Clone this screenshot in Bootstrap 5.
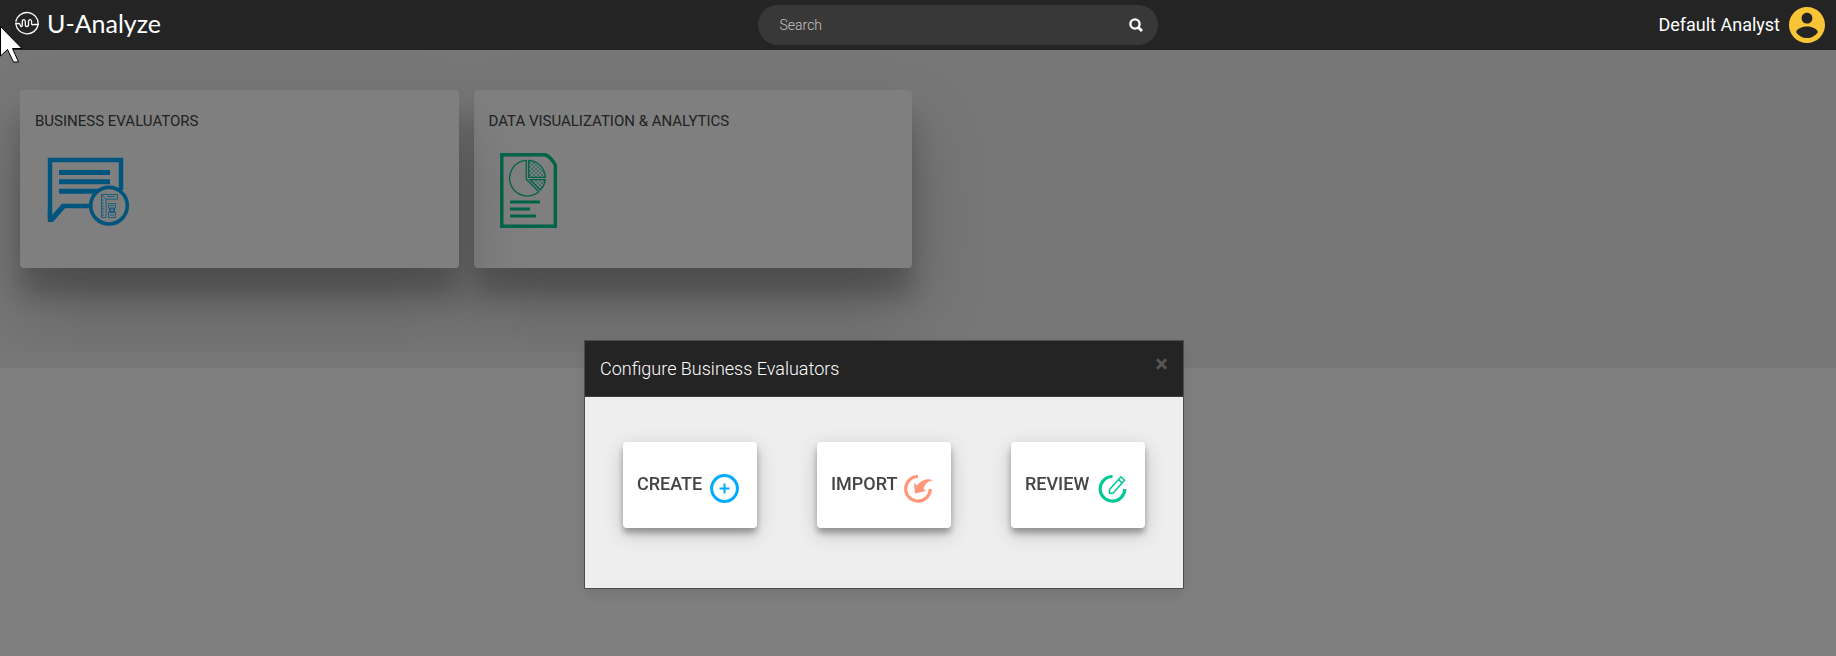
<!DOCTYPE html>
<html lang="en">
<head>
<meta charset="utf-8">
<meta name="viewport" content="width=device-width, initial-scale=1">
<title>U-Analyze</title>
<link href="https://cdn.jsdelivr.net/npm/bootstrap@5.3.0/dist/css/bootstrap.min.css" rel="stylesheet">
<style>
  body { font-family: Roboto, "Liberation Sans", sans-serif; font-size: 14px; background: #fff; color: #444; }

  .topbar { height: 50px; background: #242424; z-index: 1070; }
  .topbar-start { flex: 1 1 90px; padding-left: 15px; }
  .topbar-end { flex: 1 1 0; gap: 9px; padding-right: 11px; }
  .brand-link { gap: 8px; padding-bottom: 4px; }
  .logo { font-family: Lato, "Liberation Sans", sans-serif; font-size: 25px; line-height: 30px; }
  .search { width: 400px; height: 40px; background: #383838; border-radius: 20px; padding: 0 15px 0 22px; }
  .search input { font-size: 14px; font-weight: 300; color: #fff; }
  .search input::placeholder { color: #c4c4c4; opacity: 1; }
  .user { font-size: 18px; line-height: 24px; }

  .workspace { background: #eee; padding-bottom: 15px; }
  .tiles { grid-template-columns: repeat(4, 1fr); gap: 15px; padding: 40px 17px 85px 20px; overflow: hidden; }
  .tile { min-height: 178px; padding: 20px 15px; border-radius: 4px; background: #fff; color: #444;
          box-shadow: 0 27px 24px 0 rgba(0, 0, 0, .2), 0 40px 77px 0 rgba(0, 0, 0, .22); }
  .tile h2 { font-size: 15px; line-height: 22px; font-weight: 400; margin-bottom: 18px; }

  .config { padding: 340px 68px 0 0; }
  .config .modal-dialog { max-width: 600px; margin: 0 auto; }
  .config .modal-content { border: 1px solid #4c4c4c; border-radius: 0; background: #eee; box-shadow: 0 5px 15px rgba(0, 0, 0, .1); }
  .config .modal-header { background: #242424; border-bottom: 1px solid #403a3c; border-radius: 0; padding: 15px; }
  .config .modal-title { font-size: 18px; line-height: 25px; font-weight: 300; color: #fff; }
  .config .modal-body { padding: 45px 0 60px; gap: 60px; }
  .dismiss { font-size: 24px; line-height: 16px; font-weight: 700; color: #555; }
  .choice { width: 134px; height: 86px; padding: 0 18px 2px 14px; border-radius: 4px; background: #fff; color: #444; font-size: 18px; line-height: 24px; font-weight: 500;
            box-shadow: 0 5px 6px rgba(0, 0, 0, .3), 0 6px 20px rgba(0, 0, 0, .19); }
  .choice svg { margin-top: 9px; }

  .pointer { top: 26px; left: 0; z-index: 1080; pointer-events: none; }
</style>
</head>
<body>

<header class="topbar position-relative d-flex align-items-center">
  <div class="topbar-start">
    <a href="#" class="brand-link d-inline-flex align-items-center text-white text-decoration-none">
      <svg width="24" height="24" viewBox="0 0 24 24" fill="none" stroke="#fff" stroke-width="1.3" stroke-linecap="round" stroke-linejoin="round" aria-hidden="true">
        <path d="M.8 12.500H4C5.500 12.500 5 15.500 6.200 15.500S7.300 14 7.300 13V10.500C7.300 8 10.300 8 10.300 10.500V13.500C10.300 16.300 13.500 16.300 13.500 13.500V10.500C13.500 8 16.600 8 16.600 10.500V12.500C16.600 14.500 18 13.500 19.500 13.500H23.200"/>
        <path d="M.9 10.300A11.300 11.300 0 0 1 23.200 13.500M23.100 14A11.300 11.300 0 0 1 .8 12.500"/>
      </svg>
      <span class="logo">U-Analyze</span>
    </a>
  </div>
  <form class="search d-flex align-items-center" role="search">
    <input type="text" class="flex-grow-1 border-0 bg-transparent p-0" placeholder="Search" aria-label="Search">
    <button type="button" class="btn border-0 p-0 d-flex" aria-label="Run search">
      <svg width="14" height="14" viewBox="0 0 14 14" fill="none" stroke="#fff" aria-hidden="true"><circle cx="6" cy="6" r="4.600" stroke-width="2.400"/><path d="M9.400 9.400l3.600 3.600" stroke-width="2.800"/></svg>
    </button>
  </form>
  <div class="topbar-end d-flex justify-content-end align-items-center text-white">
    <span class="user">Default Analyst</span>
    <svg width="36" height="36" viewBox="2 2 20 20" fill="#f8c537" role="img" aria-label="Account"><path d="M12 2C6.480 2 2 6.480 2 12s4.480 10 10 10 10-4.480 10-10S17.520 2 12 2zm0 3.200c1.700 0 3 1.300 3 3s-1.300 3-3 3-3-1.300-3-3 1.300-3 3-3zm0 14c-2.500 0-4.710-1.280-6-3.220.03-1.990 4-3.080 6-3.080s5.970 1.090 6 3.080c-1.290 1.940-3.500 3.220-6 3.220z"/></svg>
  </div>
</header>

<main class="workspace">
  <div class="tiles d-grid">
    <section class="tile position-relative z-1">
      <h2>BUSINESS EVALUATORS</h2>
      <svg class="d-block" width="100" height="80" viewBox="0 0 100 80" fill="none" stroke="#0af" aria-hidden="true">
        <path d="M86 40V10H15V68M27 56H58" stroke-width="4.500"/>
        <path d="M12.800 60V72H18L30 58.200 27 53.800 17 65z" fill="#0af" stroke="none"/>
        <path d="M24 22.500H75M24 31.800H75M24 41.200H75" stroke-width="5"/>
        <circle cx="74" cy="55.700" r="18.300" fill="#fff" stroke-width="3.600"/>
        <g stroke-width=".8">
          <path d="M66.500 44.500H82.500V49.200H71V67.500H66.500zM66.500 44.500l4.500 4.700M73.500 53.500H80.500V58H73.500zM73.500 62.500H80.500V67.500H73.500zM74.500 58v4.500M79.500 58v4.500M75.500 59h3v2.500h-3z"/>
          <path d="M67 50h2M67 53h2M67 56h2M67 59h2M67 62h2M67 65h2M72 46.500h8M75 55.500h4M75 65h4"/>
        </g>
      </svg>
    </section>
    <section class="tile">
      <h2>DATA VISUALIZATION &amp; ANALYTICS</h2>
      <svg class="d-block" width="100" height="80" viewBox="0 0 100 80" fill="none" stroke="#00c890" aria-hidden="true">
        <defs>
          <pattern id="dots" width="4" height="4" patternUnits="userSpaceOnUse"><path d="M0 1h2M2 3h2" stroke="#00c890" stroke-width="1.200"/></pattern>
        </defs>
        <path d="M12.800 4.800H56.500Q62 7 66.300 15V76.200H12.800z" stroke-width="3.400"/>
        <path d="M37.300 10.400A17.800 17.800 0 1 0 49.800 41.800L37.300 29.300z" stroke-width="1.300"/>
        <path d="M39.700 10.400A17.500 17.500 0 0 1 56.300 27.400H39.700z" fill="url(#dots)" stroke-width="1.300"/>
        <path d="M41 29.600H56.300Q55.500 36 51.300 40z" fill="url(#dots)" stroke-width="1.300"/>
        <path d="M21 52H51M21 59H41M21 66H47" stroke-width="3.200"/>
      </svg>
    </section>
  </div>
</main>

<div class="modal-backdrop show"></div>

<div class="modal config d-block" tabindex="-1" role="dialog" aria-modal="true" aria-labelledby="configTitle">
  <div class="modal-dialog">
    <div class="modal-content">
      <div class="modal-header align-items-start justify-content-between">
        <h1 class="modal-title" id="configTitle">Configure Business Evaluators</h1>
        <button type="button" class="dismiss btn border-0 p-0" aria-label="Close">&times;</button>
      </div>
      <div class="modal-body d-flex justify-content-center">
        <button type="button" class="choice btn border-0 d-flex align-items-center justify-content-between">
          CREATE
          <svg width="29" height="29" viewBox="0 0 29 29" fill="none" stroke="#0af" aria-hidden="true"><circle cx="14.500" cy="14.500" r="12.900" stroke-width="3"/><path d="M14.500 9.500v10M9.500 14.500h10" stroke-width="2"/></svg>
        </button>
        <button type="button" class="choice btn border-0 d-flex align-items-center justify-content-between">
          IMPORT
          <svg width="29" height="29" viewBox="0 0 29 29" fill="none" stroke="#ff9678" aria-hidden="true"><path d="M14 2.500A12.300 12.300 0 1 0 26.300 15" stroke-width="3.200"/><path d="M10 9l3 2.500C17 6 24 3.500 29 6.500 24 7 21.500 9 19.500 14.500L22 17 11 19.500z" fill="#ff9678" stroke="none"/></svg>
        </button>
        <button type="button" class="choice btn border-0 d-flex align-items-center justify-content-between">
          REVIEW
          <svg width="29" height="29" viewBox="0 0 29 29" fill="none" stroke="#00c896" aria-hidden="true"><path d="M14.500 2.500A12.300 12.300 0 1 0 26.800 15" stroke-width="3.200"/><path d="M11.500 19.300V15.500L23 2.800l3.500 3.400L15 19.300zM20.500 5.500l3.500 3.500" stroke-width="1.500"/></svg>
        </button>
      </div>
    </div>
  </div>
</div>

<svg class="pointer position-absolute" width="24" height="38" viewBox="0 0 24 38" aria-hidden="true"><path d="M.5 0.500V30L7.500 23.500 13.500 36H18.500L12.500 22.500H22z" fill="#fff" stroke="#000"/></svg>

<script src="https://cdn.jsdelivr.net/npm/bootstrap@5.3.0/dist/js/bootstrap.bundle.min.js"></script>
</body>
</html>
